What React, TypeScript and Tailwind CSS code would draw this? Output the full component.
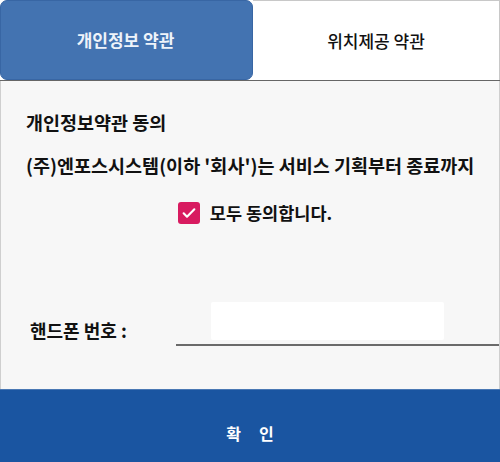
export default function App() {
  return (
    <div className="w-[500px] h-[462px] flex flex-col bg-white font-['Noto_Sans_CJK_KR',sans-serif] text-[#111]">
      {/* tabs */}
      <div className="h-[81px] flex border-b border-[#666] shrink-0">
        <div className="w-[253px] h-[80px] bg-[#4373b1] border border-[#3866a4] rounded-[7px] flex items-center justify-center text-[17px] font-bold text-[#eef3fa] pr-[2px]">
          개인정보 약관
        </div>
        <div className="flex-1 bg-white border-t border-r border-[#c8c8c8] flex items-center justify-center text-[17px] font-medium">
          위치제공 약관
        </div>
      </div>

      {/* body */}
      <div className="flex-1 bg-[#f7f7f7] border-x border-[#cfcfcf] flex flex-col">
        <div className="pl-[25px] pt-[28px] text-[18.5px] font-bold leading-[26px]">개인정보약관 동의</div>
        <div className="pl-[25px] pt-[17px] text-[18.5px] font-bold leading-[26px] whitespace-nowrap">
          (주)엔포스시스템(이하 '회사')는 서비스 기획부터 종료까지
        </div>
        <div className="flex items-center justify-center gap-[10px] pt-[22px] pl-[10px]">
          <span className="w-[22px] h-[22px] rounded-[3px] bg-[#d81b60] flex items-center justify-center">
            <svg width="16" height="16" viewBox="0 0 24 24" fill="none" stroke="white" strokeWidth="3.2" strokeLinecap="round" strokeLinejoin="round">
              <path d="M4 12.5l5 5L20 6.5" />
            </svg>
          </span>
          <span className="text-[17.5px] font-bold leading-[26px]">모두 동의합니다.</span>
        </div>

        <div className="flex items-end mt-[76px]">
          <div className="w-[175px] pl-[29px] pb-[3px] text-[18px] font-bold leading-[26px]">핸드폰 번호 :</div>
          <div className="flex-1 border-b-2 border-[#6a6a6a] pl-[35px] pr-[55px] pb-[4px]">
            <div className="h-[38px] bg-white rounded-[2px]" />
          </div>
        </div>
      </div>

      {/* confirm */}
      <button className="h-[73px] shrink-0 bg-[#1a55a1] border-t border-[#4a78b4] text-white text-[16px] font-bold flex items-center justify-center gap-[18px] pt-[13px]">
        <span>확</span>
        <span>인</span>
      </button>
    </div>
  );
}
